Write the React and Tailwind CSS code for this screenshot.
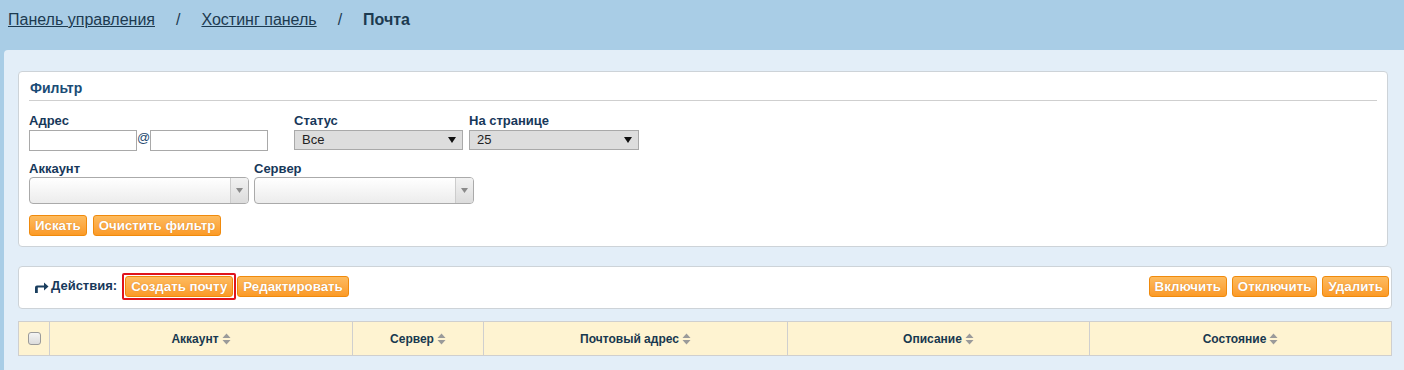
import React from "react";

const font = { fontFamily: '"Liberation Sans", Arial, sans-serif' };

function OrangeButton({ children }) {
  return (
    <button
      type="button"
      className="h-[21px] rounded-[3px] border border-[#f08a0c] bg-gradient-to-b from-[#fdbb5e] to-[#fb9a25] px-[5px] text-[13.3px] font-bold leading-[19px] text-white [text-shadow:0_0_1px_rgba(160,80,0,0.5)]"
    >
      {children}
    </button>
  );
}

function SortIcon() {
  return (
    <svg width="9" height="12" viewBox="0 0 9 12" className="ml-[3px] inline-block align-middle">
      <path d="M4.5 0.5 L8.5 5 L0.5 5 Z" fill="#9a9a9a" />
      <path d="M4.5 11.5 L8.5 7 L0.5 7 Z" fill="#9a9a9a" />
    </svg>
  );
}

function Label({ children }) {
  return (
    <div className="h-[17px] text-[13px] font-bold leading-[17px] text-[#17385a]">
      {children}
    </div>
  );
}

function NativeSelect({ value, width }) {
  return (
    <div
      className={`flex h-[20px] items-center justify-between border border-[#a9a9a9] bg-[#dddddd] pl-[7px] pr-[6px] text-[13px] text-[#222] ${width}`}
    >
      <span>{value}</span>
      <svg width="8" height="6" viewBox="0 0 8 6">
        <path d="M0 0 L8 0 L4 6 Z" fill="#111" />
      </svg>
    </div>
  );
}

function ChosenSelect() {
  return (
    <div className="flex h-[27px] w-[220px] overflow-hidden rounded-[4px] border border-[#aaa] bg-gradient-to-b from-white to-[#ececec]">
      <div className="flex-1" />
      <div className="flex w-[18px] items-center justify-center border-l border-[#ccc] bg-gradient-to-b from-[#f2f2f2] to-[#dcdcdc]">
        <svg width="7" height="5" viewBox="0 0 7 5">
          <path d="M0 0 L7 0 L3.5 5 Z" fill="#8a8a8a" />
        </svg>
      </div>
    </div>
  );
}

function FilterPanel() {
  return (
    <section className="mr-[16px] rounded-[4px] border border-[#cdd3d8] bg-white pb-[10px] pl-[10px] pr-[10px] pt-[8px]">
      <div className="border-b border-[#cfcfcf] pb-[3px] pl-[1px] text-[14px] font-bold leading-[17px] text-[#1a4c76]">
        Фильтр
      </div>
      <div className="mt-[11px] flex">
        <div className="w-[265px]">
          <Label>Адрес</Label>
          <div className="mt-[1px] flex items-start">
            <input className="h-[21px] w-[108px] border border-[#a9a9a9] bg-white" />
            <span className="w-[13px] text-center text-[13px] leading-[16px] text-[#1f4a70]">@</span>
            <input className="h-[21px] w-[118px] border border-[#a9a9a9] bg-white" />
          </div>
        </div>
        <div className="w-[175px]">
          <Label>Статус</Label>
          <div className="mt-[1px]">
            <NativeSelect value="Все" width="w-[169px]" />
          </div>
        </div>
        <div>
          <Label>На странице</Label>
          <div className="mt-[1px]">
            <NativeSelect value="25" width="w-[170px]" />
          </div>
        </div>
      </div>
      <div className="mt-[9px] flex gap-[5px]">
        <div>
          <Label>Аккаунт</Label>
          <ChosenSelect />
        </div>
        <div>
          <Label>Сервер</Label>
          <ChosenSelect />
        </div>
      </div>
      <div className="mt-[11px] flex gap-[6px]">
        <OrangeButton>Искать</OrangeButton>
        <OrangeButton>Очистить фильтр</OrangeButton>
      </div>
    </section>
  );
}

function ActionsPanel() {
  return (
    <section className="mt-[19px] mr-[12px] flex h-[43px] items-center justify-between rounded-[4px] border border-[#cdd3d8] bg-white pb-[3px] pl-[15px] pr-[2px]">
      <div className="flex items-center">
        <svg width="15" height="11" viewBox="0 0 15 11" className="mr-[2px] mt-[2px]">
          <path d="M1 11 V5.5 Q1 3.5 3 3.5 H10 V0.5 L14.5 4.5 L10 8.5 V5.5 H3.8 V11 Z" fill="#1a3e5e" />
        </svg>
        <span className="text-[13px] font-bold text-[#17385a]">Действия:</span>
        <div className="ml-[5px] flex rounded-[2px] border-2 border-[#e0141b] px-[1px] py-[1px]">
          <OrangeButton>Создать почту</OrangeButton>
        </div>
        <div className="ml-[1px] flex">
          <OrangeButton>Редактировать</OrangeButton>
        </div>
      </div>
      <div className="flex gap-[5px]">
        <OrangeButton>Включить</OrangeButton>
        <OrangeButton>Отключить</OrangeButton>
        <OrangeButton>Удалить</OrangeButton>
      </div>
    </section>
  );
}

function TableHeader() {
  const cols = [
    { label: "Аккаунт", w: "w-[303px]" },
    { label: "Сервер", w: "w-[131px]" },
    { label: "Почтовый адрес", w: "w-[304px]" },
    { label: "Описание", w: "w-[302px]" },
    { label: "Состояние", w: "flex-1" },
  ];
  return (
    <div className="mt-[12px] mr-[12px] flex h-[35px] border border-[#cfcfcf] bg-[#fef3d1]">
      <div className="flex w-[31px] items-center justify-center border-r border-[#cfcfcf]">
        <div className="h-[13px] w-[13px] rounded-[3px] border border-[#9a9a9a] bg-gradient-to-b from-[#f4f4f4] to-[#dcdcdc]" />
      </div>
      {cols.map((c, i) => (
        <div
          key={c.label}
          className={`flex items-center justify-center text-[12px] font-bold text-[#18384f] ${c.w} ${i < cols.length - 1 ? "border-r border-[#cfcfcf]" : ""}`}
        >
          {c.label}
          <SortIcon />
        </div>
      ))}
    </div>
  );
}

export default function App() {
  return (
    <div style={font} className="h-[370px] w-[1404px] overflow-hidden bg-[#a9cde6]">
      <div className="flex h-[50px] items-start pl-[8px] pt-[10px] text-[16px] leading-[20px] text-[#1c3a50]">
        <a href="#" className="underline">Панель управления</a>
        <span className="mx-[21px]">/</span>
        <a href="#" className="underline">Хостинг панель</a>
        <span className="mx-[21px]">/</span>
        <span className="font-bold">Почта</span>
      </div>
      <main className="ml-[4px] h-[320px] rounded-tl-[4px] bg-[#e3eef8] pl-[14px] pt-[21px]">
        <FilterPanel />
        <ActionsPanel />
        <TableHeader />
      </main>
    </div>
  );
}
